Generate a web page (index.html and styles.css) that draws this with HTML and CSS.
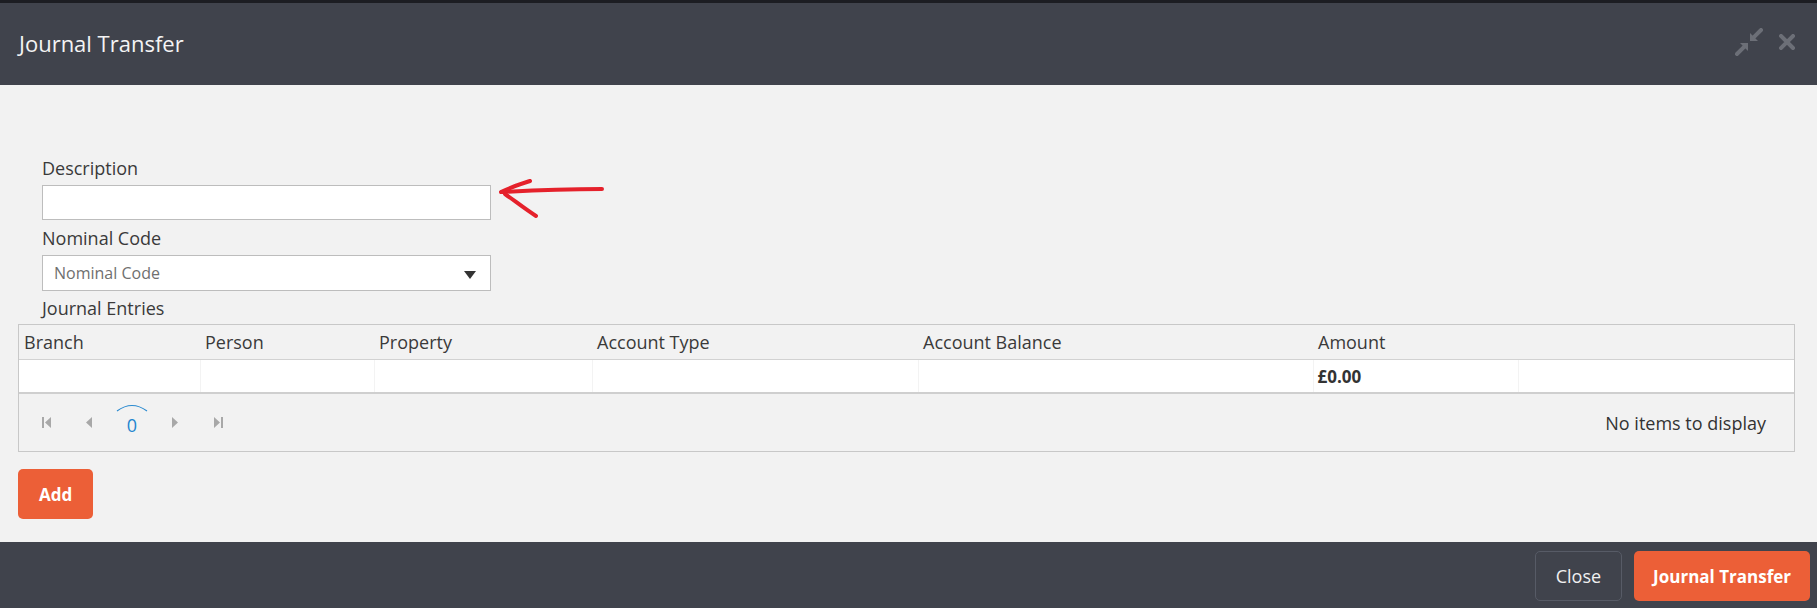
FILE: index.html
```html
<!DOCTYPE html>
<html lang="en">

<head>
    <meta charset="UTF-8">
    <meta name="viewport" content="width=device-width, initial-scale=1.0">
    <title>Journal Transfer</title>
    <link rel="stylesheet" href="styles.css">
</head>

<body>
    <div class="modal">
        <div class="modalHeader">
            <h1 class="modalTitle">Journal Transfer</h1>
            <div class="headerActions">
                <svg class="headerIcon" width="28" height="28" viewBox="0 0 28 28">
                    <path d="M26 2 L18 10" stroke="#6c6f77" stroke-width="4" stroke-linecap="square" />
                    <path d="M15 13 L15 5 L23 13 Z" fill="#6c6f77" />
                    <path d="M2 26 L10 18" stroke="#6c6f77" stroke-width="4" stroke-linecap="square" />
                    <path d="M13 15 L13 23 L5 15 Z" fill="#6c6f77" />
                </svg>
                <svg class="headerIcon" width="16" height="16" viewBox="0 0 16 16">
                    <path d="M2 2 L14 14 M14 2 L2 14" stroke="#6c6f77" stroke-width="4" stroke-linecap="square" />
                </svg>
            </div>
        </div>

        <div class="modalBody">
            <div class="field">
                <label class="fieldLabel">Description</label>
                <div class="inputWrap">
                    <input type="text" class="textInput">
                    <svg class="annotation" width="112" height="42" viewBox="0 0 112 42">
                        <path d="M105 10 C 80 10, 40 11, 5 13" stroke="#e5212b" stroke-width="4" fill="none" stroke-linecap="round" />
                        <path d="M4 13 C 14 8, 24 5, 33 2" stroke="#e5212b" stroke-width="4" fill="none" stroke-linecap="round" />
                        <path d="M8 15 C 18 22, 28 30, 39 37" stroke="#e5212b" stroke-width="4" fill="none" stroke-linecap="round" />
                    </svg>
                </div>
            </div>
            <div class="field">
                <label class="fieldLabel">Nominal Code</label>
                <div class="selectBox">
                    <span class="placeholder">Nominal Code</span>
                    <svg width="12" height="8" viewBox="0 0 12 8">
                        <path d="M0 0 L12 0 L6 8 Z" fill="#333" />
                    </svg>
                </div>
            </div>
            <div class="field">
                <label class="fieldLabel">Journal Entries</label>
            </div>

            <div class="grid">
                <table class="gridTable">
                    <colgroup>
                        <col style="width: 181px">
                        <col style="width: 174px">
                        <col style="width: 218px">
                        <col style="width: 326px">
                        <col style="width: 395px">
                        <col style="width: 205px">
                        <col>
                    </colgroup>
                    <thead>
                        <tr>
                            <th>Branch</th>
                            <th>Person</th>
                            <th>Property</th>
                            <th>Account Type</th>
                            <th>Account Balance</th>
                            <th>Amount</th>
                            <th></th>
                        </tr>
                    </thead>
                    <tbody>
                        <tr>
                            <td></td>
                            <td></td>
                            <td></td>
                            <td></td>
                            <td></td>
                            <td class="total">£0.00</td>
                            <td></td>
                        </tr>
                    </tbody>
                </table>
                <div class="pager">
                    <div class="pagerButtons">
                        <span class="pagerItem">
                            <svg width="9" height="11" viewBox="0 0 9 11"><path d="M0 0 H2 V11 H0 Z M9 0 V11 L3 5.5 Z" fill="#a8a8a8" /></svg>
                        </span>
                        <span class="pagerItem">
                            <svg width="6" height="11" viewBox="0 0 6 11"><path d="M6 0 V11 L0 5.5 Z" fill="#a8a8a8" /></svg>
                        </span>
                        <span class="pagerItem pagerCurrent">
                            <svg width="32" height="8" viewBox="0 0 32 8"><path d="M1 7 Q16 -4 31 7" stroke="#2a8ad0" stroke-width="1.2" fill="none" /></svg>
                            <span>0</span>
                        </span>
                        <span class="pagerItem">
                            <svg width="6" height="11" viewBox="0 0 6 11"><path d="M0 0 V11 L6 5.5 Z" fill="#a8a8a8" /></svg>
                        </span>
                        <span class="pagerItem">
                            <svg width="9" height="11" viewBox="0 0 9 11"><path d="M0 0 V11 L6 5.5 Z M7 0 H9 V11 H7 Z" fill="#a8a8a8" /></svg>
                        </span>
                    </div>
                    <span class="pagerInfo">No items to display</span>
                </div>
            </div>

            <button class="btn btnPrimary addButton">Add</button>
        </div>

        <div class="modalFooter">
            <button class="btn btnOutline">Close</button>
            <button class="btn btnPrimary">Journal Transfer</button>
        </div>
    </div>
</body>

</html>
```

FILE: styles.css
```css
html,
body {
    margin: 0;
    padding: 0;
}

body {
    font-family: 'Open Sans', 'Noto Sans', sans-serif;
    background-color: #f2f2f2;
    color: #333;
}

.modal {
    display: flex;
    flex-direction: column;
    height: 608px;
}

.modalHeader {
    height: 82px;
    border-top: 3px solid #1c1d22;
    background-color: #40434c;
    display: flex;
    align-items: center;
    justify-content: space-between;
    padding: 0 22px 0 19px;
}

.modalTitle {
    margin: 0;
    font-size: 22px;
    font-weight: normal;
    color: #f4f4f4;
    margin-top: -3px;
}

.headerActions {
    display: flex;
    align-items: center;
    gap: 16px;
    margin-top: -4px;
}

.headerIcon {
    display: block;
}

.modalBody {
    flex: 1;
    padding: 72px 22px 0 18px;
}

.field {
    margin-left: 24px;
}

.fieldLabel {
    display: block;
    font-size: 18px;
    line-height: 22px;
    color: #3a3a3a;
    margin-bottom: 6px;
}

.inputWrap {
    position: relative;
    width: 449px;
    margin-bottom: 7px;
}

.textInput {
    display: block;
    box-sizing: border-box;
    width: 449px;
    height: 35px;
    border: 1px solid #bdbdbd;
    background-color: #fff;
    margin: 0;
    padding: 0 10px;
    font-family: inherit;
    font-size: 16px;
}

.annotation {
    position: absolute;
    left: 455px;
    top: -6px;
}

.selectBox {
    box-sizing: border-box;
    width: 449px;
    height: 36px;
    border: 1px solid #bdbdbd;
    background-color: #fff;
    display: flex;
    align-items: center;
    justify-content: space-between;
    padding: 0 14px 0 11px;
    margin-bottom: 6px;
}

.placeholder {
    font-size: 16px;
    color: #6f6f6f;
}

.selectBox svg {
    margin-top: 3px;
}

.field:nth-child(3) .fieldLabel {
    margin-bottom: 5px;
}

.grid {
    border: 1px solid #c8c8c8;
}

.gridTable {
    width: 100%;
    border-collapse: collapse;
    table-layout: fixed;
}

.gridTable th {
    height: 34px;
    padding: 0 5px;
    text-align: left;
    font-size: 18px;
    font-weight: normal;
    color: #3a3a3a;
    background-color: #f2f2f2;
    border-bottom: 1px solid #d2d2d2;
}

.gridTable td {
    height: 32px;
    padding: 0 4px;
    background-color: #fff;
    border-left: 1px solid #f3f3f3;
    border-bottom: 2px solid #cfcfcf;
    font-size: 17px;
}

.gridTable td:first-child {
    border-left: none;
}

.total {
    font-weight: bold;
    color: #333;
}

.pager {
    height: 57px;
    display: flex;
    align-items: center;
    justify-content: space-between;
    padding: 0 28px 0 11px;
}

.pagerButtons {
    display: flex;
    align-items: center;
    gap: 11px;
}

.pagerItem {
    width: 32px;
    height: 32px;
    display: flex;
    align-items: center;
    justify-content: center;
}

.pagerCurrent {
    flex-direction: column;
    justify-content: flex-start;
    color: #1f86cf;
    font-size: 18px;
    line-height: 22px;
    margin-top: -6px;
}

.pagerCurrent svg {
    display: block;
    margin-bottom: 2px;
}

.pagerInfo {
    font-size: 18px;
    color: #333;
}

.btn {
    font-family: inherit;
    height: 50px;
    border-radius: 5px;
    cursor: pointer;
    padding: 0 19px;
    margin: 0;
}

.btnPrimary {
    background-color: #ec5f37;
    border: none;
    color: #fff;
    font-size: 17px;
    font-weight: bold;
}

.btnOutline {
    background-color: transparent;
    border: 1px solid #575b66;
    color: #f0f0f0;
    font-size: 18px;
    padding: 0 20px;
}

.addButton {
    display: block;
    margin-top: 17px;
    padding: 0 21px;
}

.modalFooter {
    height: 66px;
    box-sizing: border-box;
    background-color: #40434c;
    display: flex;
    justify-content: flex-end;
    align-items: flex-start;
    gap: 12px;
    padding: 9px 7px 0 0;
}
```
